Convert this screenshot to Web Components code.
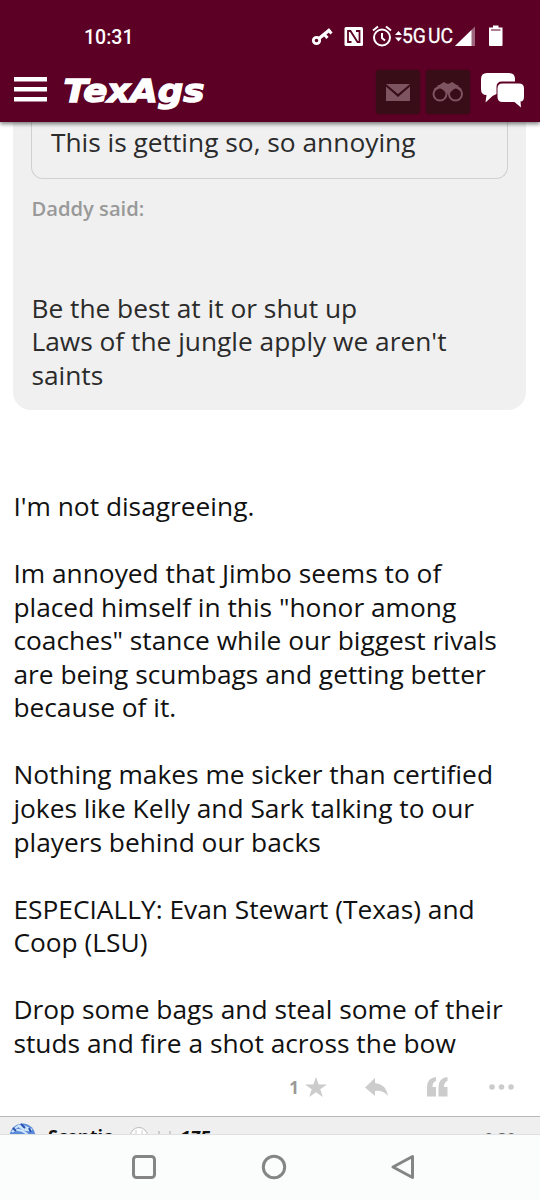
<!DOCTYPE html>
<html lang="en">
<head>
<meta charset="utf-8">
<title>TexAgs</title>
<style>
  body {
    margin: 0;
    background: #fff;
    font-family: "Open Sans", sans-serif;
  }
</style>
</head>
<body>
<forum-screen>
  <status-bar slot="top" time="10:31"></status-bar>
  <site-header slot="top"></site-header>
  <quote-block>
    <nested-quote>This is getting so, so annoying</nested-quote>
    <quote-author>Daddy said:</quote-author>
    <div>Be the best at it or shut up<br>Laws of the jungle apply we aren't<br>saints</div>
  </quote-block>
  <post-body>I'm not disagreeing.

Im annoyed that Jimbo seems to of
placed himself in this "honor among
coaches" stance while our biggest rivals
are being scumbags and getting better
because of it.

Nothing makes me sicker than certified
jokes like Kelly and Sark talking to our
players behind our backs

ESPECIALLY: Evan Stewart (Texas) and
Coop (LSU)

Drop some bags and steal some of their
studs and fire a shot across the bow</post-body>
  <post-actions stars="1"></post-actions>
  <next-post></next-post>
  <system-nav slot="bottom"></system-nav>
</forum-screen>

<script>
class BaseElement extends HTMLElement {
  constructor() {
    super();
    this.attachShadow({ mode: 'open' });
  }

  connectedCallback() {
    this.shadowRoot.innerHTML = this.render();
  }
}

class ForumScreen extends BaseElement {
  render() {
    return `
      <style>
        :host {
          display: flex;
          flex-direction: column;
          height: 1200px;
          width: 540px;
          overflow: hidden;
        }
        header {
          flex: none;
          height: 122px;
          background: #5c0025;
          box-shadow: 0 2px 4px rgba(0, 0, 0, 0.5);
          z-index: 1;
        }
        main {
          flex: 1;
          min-height: 0;
          overflow: hidden;
        }
      </style>
      <header><slot name="top"></slot></header>
      <main><slot></slot></main>
      <slot name="bottom"></slot>
    `;
  }
}

class StatusBar extends BaseElement {
  render() {
    return `
      <style>
        :host {
          display: flex;
          align-items: center;
          justify-content: space-between;
          height: 62px;
          padding: 11px 36px 0 84px;
          box-sizing: border-box;
          color: #fff;
          font: 500 19.5px Roboto, sans-serif;
        }
        span { padding-top: 2px; }
        svg { display: block; }
      </style>
      <span>${this.getAttribute('time')}</span>
      <svg width="194" height="26" viewBox="310 24 194 26" fill="#fff">
        <!-- key -->
        <circle cx="316.5" cy="40.5" r="3.2" fill="none" stroke="#fff" stroke-width="2.8"/>
        <path d="M319 38.500L330 29.500" stroke="#fff" stroke-width="3.400"/>
        <path d="M323.500 33.500l4 4.500M328 29.500l3.500 4" stroke="#fff" stroke-width="3"/>
        <!-- nfc -->
        <rect x="344.500" y="27" width="18.500" height="19" rx="1.500"/>
        <path d="M351.500 42H348V31h2.500l7 11h2V31H356" fill="none" stroke="#5c0025" stroke-width="1.800"/>
        <!-- alarm -->
        <g fill="none" stroke="#fff" stroke-width="2">
          <circle cx="382" cy="37.500" r="8"/>
          <path d="M382 33v5l3 2.500M373 30.500l5-4M391 30.500l-5-4"/>
        </g>
        <!-- data arrows -->
        <path d="M395 35l3.500-4 3.500 4zM395 37.500l3.500 4 3.500-4z"/>
        <text x="402" y="43" font-size="20.500" font-weight="400" stroke="#fff" stroke-width=".3" textLength="24" lengthAdjust="spacingAndGlyphs">5G</text>
        <text x="428" y="43" font-size="20.500" font-weight="400" stroke="#fff" stroke-width=".3" textLength="25" lengthAdjust="spacingAndGlyphs">UC</text>
        <!-- signal -->
        <path d="M455 46L475 26.500V46z" opacity=".4"/>
        <path d="M455 46L471.500 30V46z"/>
        <!-- battery -->
        <path d="M493 25.500h5.500v2h4V45q0 1-1 1h-11.500q-1 0-1-1V27.500h4z"/>
        <path d="M491 30h9.500" stroke="#5c0025"/>
      </svg>
    `;
  }
}

class SiteHeader extends BaseElement {
  render() {
    return `
      <style>
        :host {
          display: flex;
          align-items: center;
          height: 60px;
          padding: 0 16px 0 14px;
          box-sizing: border-box;
        }
        svg { display: block; flex: none; }
        .menu { width: 33px; height: 25px; margin-top: -5px; }
        .logo { margin-left: 13px; width: 160px; }
        .button {
          width: 44px;
          height: 44px;
          margin-right: 6px;
          border-radius: 4px;
          background: #380d17;
          box-shadow: 0 0 2px #380d17;
        }
        .mail { margin-left: auto; }
        .chat { margin: -3px 0 0 5px; }
      </style>
      <svg class="menu" viewBox="0 0 33 25" fill="#fff">
        <path d="M0 0h33v4.500H0zM0 10h33v4.500H0zM0 20h33v4.500H0z"/>
      </svg>
      <svg class="logo" height="40" viewBox="60 72 160 40">
        <text x="63.500" y="102" fill="#fff" stroke="#fff" stroke-width="1.400" font-family="DejaVu Sans" font-weight="bold"
          font-style="italic" font-size="32" textLength="141" lengthAdjust="spacingAndGlyphs">TexAgs</text>
      </svg>
      <svg class="button mail" viewBox="0 0 44 44" fill="#7f5461">
        <path d="M10 14h24l-12 10zM10 16.500l12 10.500 12-10.500V31H10z"/>
      </svg>
      <svg class="button" viewBox="0 0 44 44" fill="none" stroke="#7f5461" stroke-width="2">
        <circle cx="14" cy="24" r="6.500"/>
        <circle cx="29.500" cy="24" r="6.500"/>
        <path d="M8.500 20l7-5 2.500-1.500 3 1.500h2l3-1.500 2.500 1.500 6.500 5" stroke-width="2.500"/>
        <path d="M14 16l8 7 8-7z" fill="#7f5461"/>
      </svg>
      <svg class="chat" width="43" height="35" viewBox="0 0 43 35" fill="#fff">
        <path d="M6 0h22q6 0 6 6v2.500H21q-5.500 0-5.500 5.500v7l-4 2-7 6.500 1-7.500Q0 22 0 16V6q0-6 6-6z"/>
        <path d="M21.500 10.500H38q5 0 5 5v8q0 5-3.500 5l.5 6-6.500-5.500h-12q-5 0-5-5v-8.500q0-5 5-5z"/>
      </svg>
    `;
  }
}

class QuoteBlock extends BaseElement {
  render() {
    return `
      <style>
        :host {
          display: block;
          height: 287.500px;
          margin: 0 14px 0 13.400px;
          padding: 0 18px;
          box-sizing: border-box;
          border-radius: 0 0 18px 18px;
          background: #f0f0f0;
          color: #2b2b2b;
          font-size: 26.320px;
          line-height: 33.560px;
          white-space: nowrap;
        }
      </style>
      <slot></slot>
    `;
  }
}

class NestedQuote extends BaseElement {
  render() {
    return `
      <style>
        :host {
          display: block;
          height: 57px;
          padding: 4px 18.500px 0;
          box-sizing: border-box;
          border: solid #d0d0d0;
          border-width: 0 1px 1px;
          border-radius: 0 0 12px 12px;
        }
      </style>
      <slot></slot>
    `;
  }
}

class QuoteAuthor extends BaseElement {
  render() {
    return `
      <style>
        :host {
          display: block;
          padding: 15px 0 69.500px;
          color: #999;
          font-size: 20.200px;
          font-weight: 600;
          line-height: 28px;
        }
      </style>
      <slot></slot>
    `;
  }
}

class PostBody extends BaseElement {
  render() {
    return `
      <style>
        :host {
          display: block;
          padding: 80.400px 13.400px 0;
          color: #111;
          font-size: 26.320px;
          line-height: 33.560px;
        }
        div { white-space: pre; }
      </style>
      <div><slot></slot></div>
    `;
  }
}

class PostActions extends BaseElement {
  render() {
    return `
      <style>
        :host {
          display: flex;
          align-items: center;
          justify-content: flex-end;
          height: 56px;
          padding: 0 26px 2px 0;
          box-sizing: border-box;
          color: #999;
          font-size: 17px;
          font-weight: 700;
        }
        svg { display: block; fill: #ccc; }
        .star { margin: 0 38px 0 6px; }
        .reply { margin-right: 39px; }
        .quote { margin-right: 41px; }
      </style>
      <span>${this.getAttribute('stars')}</span>
      <svg class="star" width="22" height="20" viewBox="0 0 22 20"><path d="M11 0l2.700 7.500H22l-6.700 4.700 2.500 7.800L11 15.300 4.200 20l2.500-7.800L0 7.500h8.300z"/></svg>
      <svg class="reply" width="23" height="19" viewBox="0 0 23 19"><path d="M0 9.500L10 0v5q11 1 13 13-5-6-13-5v5z"/></svg>
      <svg class="quote" width="21" height="20" viewBox="0 0 21 20"><path d="M9 0v4Q5.500 5 5.500 10H9v9.500H0V10Q0 1 9 0zM20.500 0v4Q17 5 17 10h3.500v9.500h-9V10Q11.500 1 20.500 0z"/></svg>
      <svg width="25" height="6" viewBox="0 0 25 6"><circle cx="3" cy="3" r="2.800"/><circle cx="12.500" cy="3" r="2.800"/><circle cx="22" cy="3" r="2.800"/></svg>
    `;
  }
}

class NextPost extends BaseElement {
  render() {
    return `
      <style>
        :host {
          display: flex;
          align-items: flex-start;
          height: 60px;
          padding: 6px 24px 0 9px;
          box-sizing: border-box;
          border-top: 1px solid #b9b9b9;
          background: #f0efef;
          color: #111;
          font-size: 18px;
          line-height: 24px;
        }
        svg { flex: none; }
        .name { width: 77px; margin-left: 12px; padding-top: 1px; font-weight: 700; }
        .badge { margin: -1px 8px 0 5px; }
        .count { margin-left: 8px; padding-top: 2px; font-weight: 700; font-style: italic; }
        time { margin-left: auto; padding-top: 4px; color: #666; font-size: 16px; }
      </style>
      <svg width="27" height="27" viewBox="0 0 27 27">
        <circle cx="13.500" cy="13.500" r="13" fill="#5b8bd8"/>
        <path d="M3 9Q9 1 14 3t9 4M9 2q5 6 14 5M4 8q8-3 15 4" fill="none" stroke="#cfe6fa" stroke-width="2"/>
        <path d="M4 5l3 3M12 1l4 4M20 5l2 4" stroke="#2a4fb0" stroke-width="2"/>
      </svg>
      <span class="name">Scentic</span>
      <svg class="badge" width="18" height="20" viewBox="0 -5 18 20"><circle cx="9" cy="9" r="8.500" fill="#fff" stroke="#bbb"/><path d="M6 3v6M12 3v6" stroke="#ccc"/></svg>
      <svg width="16" height="20" viewBox="0 0 16 20"><path d="M3 8v8M14 8v8" stroke="#aaa"/></svg>
      <span class="count">17E</span>
      <time>9:39</time>
    `;
  }
}

class SystemNav extends BaseElement {
  render() {
    return `
      <style>
        :host {
          display: flex;
          flex: none;
          align-items: center;
          justify-content: center;
          gap: 103.500px;
          height: 66px;
          padding: 0 0 2px 7px;
          box-sizing: border-box;
          border-top: 1px solid #dfe0e2;
          background: #fbfdfc;
        }
        svg { fill: none; stroke: #858585; stroke-width: 3; stroke-linejoin: round; }
      </style>
      <svg width="26" height="26"><rect x="2.500" y="2.500" width="21" height="21" rx="3"/></svg>
      <svg width="26" height="26"><circle cx="13" cy="13" r="10.700"/></svg>
      <svg width="26" height="26"><path d="M3 13L22.500 2.500v21z"/></svg>
    `;
  }
}

customElements.define('forum-screen', ForumScreen);
customElements.define('status-bar', StatusBar);
customElements.define('site-header', SiteHeader);
customElements.define('quote-block', QuoteBlock);
customElements.define('nested-quote', NestedQuote);
customElements.define('quote-author', QuoteAuthor);
customElements.define('post-body', PostBody);
customElements.define('post-actions', PostActions);
customElements.define('next-post', NextPost);
customElements.define('system-nav', SystemNav);
</script>
</body>
</html>
